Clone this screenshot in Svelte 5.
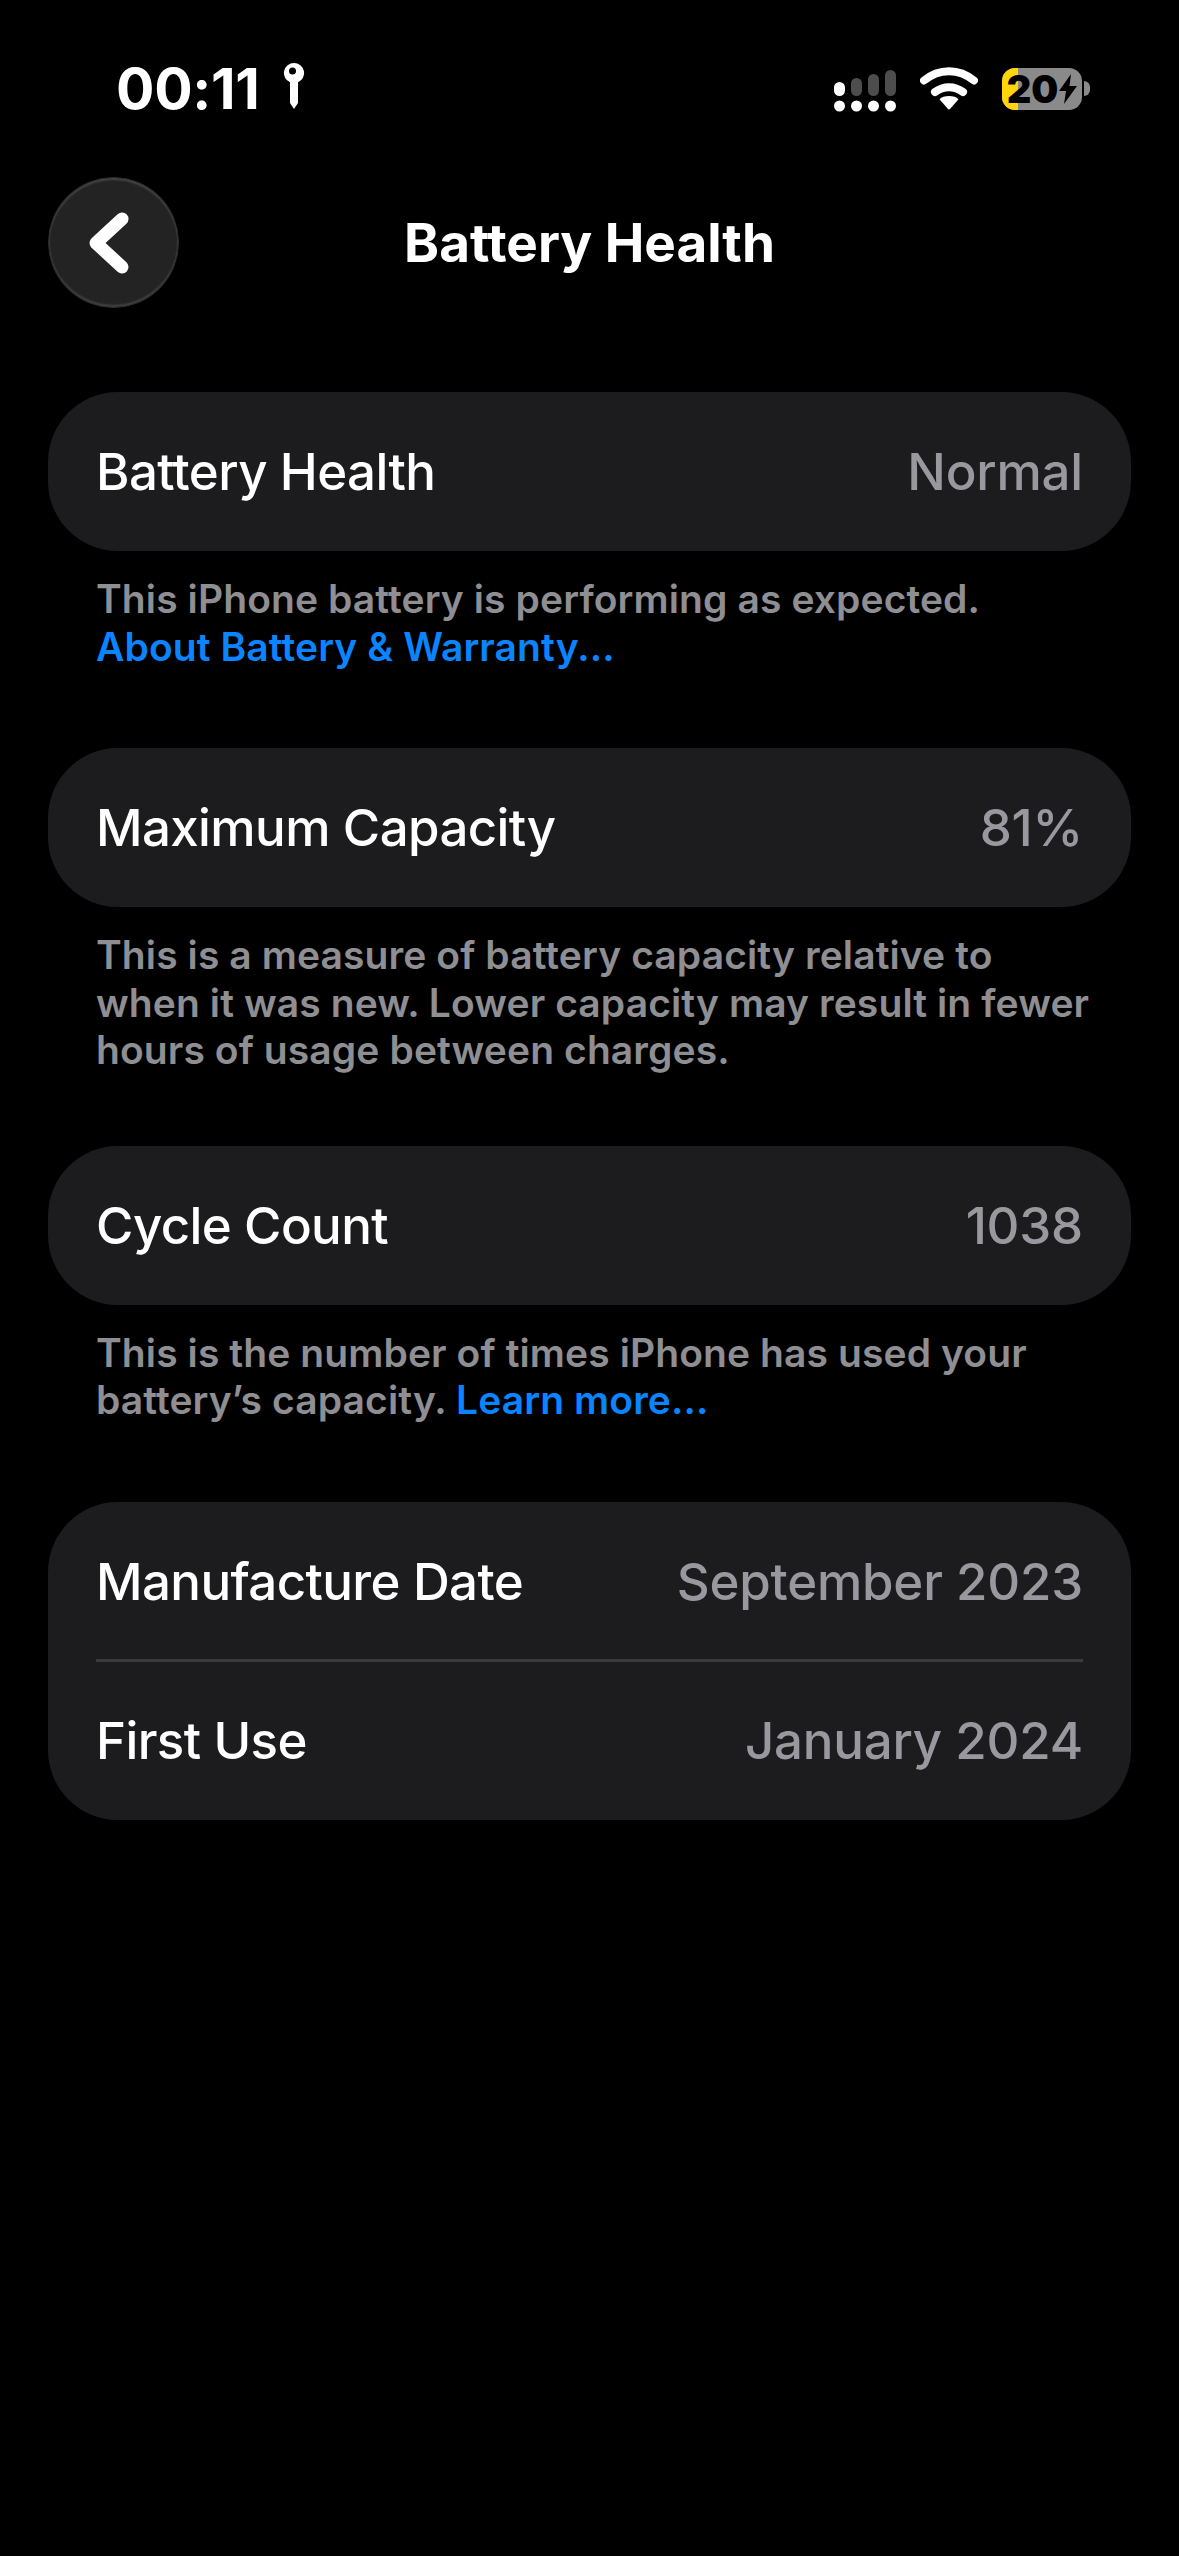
<script>
  const sections = [
    { rows: [{ label: "Battery Health", value: "Normal" }], note: "This iPhone battery is performing as expected.", link: "About Battery & Warranty...", block: true },
    { rows: [{ label: "Maximum Capacity", value: "81%" }], note: "This is a measure of battery capacity relative to when it was new. Lower capacity may result in fewer hours of usage between charges.", tight: true },
    { rows: [{ label: "Cycle Count", value: "1038" }], note: "This is the number of times iPhone has used your battery’s capacity.", link: "Learn more..." },
    { rows: [{ label: "Manufacture Date", value: "September 2023" }, { label: "First Use", value: "January 2024" }] }
  ];
</script>

<div class="page">
  <div class="status">
    <div class="time-wrap">
      <span class="time">00:11</span>
      <svg class="key" width="22" height="48" viewBox="0 0 22 48">
        <path fill="#fff" fill-rule="evenodd" d="M11 1a10 10 0 0 1 4 19.200V41l-4 6-4-6V20.200A10 10 0 0 1 11 1zm-1.500 4.500a3.500 3.500 0 1 0 0 7 3.500 3.500 0 0 0 0-7z" />
      </svg>
    </div>
    <div class="status-right">
      <svg class="signal" width="62" height="42" viewBox="0 0 62 42">
        <rect x="0" y="12" width="11" height="14" rx="5.500" fill="#fff" />
        <rect x="17" y="8" width="11" height="18" rx="5.500" fill="#4d4d4d" />
        <rect x="34" y="4" width="11" height="22" rx="5.500" fill="#4d4d4d" />
        <rect x="51" y="0" width="11" height="26" rx="5.500" fill="#4d4d4d" />
        <circle cx="5.500" cy="36" r="5.500" fill="#fff" />
        <circle cx="22.500" cy="36" r="5.500" fill="#fff" />
        <circle cx="39.500" cy="36" r="5.500" fill="#fff" />
        <circle cx="56.500" cy="36" r="5.500" fill="#fff" />
      </svg>
      <svg class="wifi" width="58" height="43" viewBox="0 0 58 43">
        <path fill="none" stroke="#fff" stroke-width="8" stroke-linecap="round" d="M4 13.500C19 1 39 1 54 13.500" />
        <path fill="none" stroke="#fff" stroke-width="8" stroke-linecap="round" d="M15 25c8.500-6.500 19.500-6.500 28 0" />
        <path fill="#fff" d="M29 29c4 0 7.500 1.200 9.500 3.200L30 42a1.500 1.500 0 0 1-2 0l-8.500-9.800C21.500 30.200 25 29 29 29z" />
      </svg>
      <div class="battery">
        <div class="cell">
          <div class="charge"></div>
          <span class="pct">20</span>
          <svg class="bolt" width="18" height="30" viewBox="0 0 18 30"><path d="M12 0 0 17h7l-2 13L18 12h-7.500z" fill="#000" /></svg>
        </div>
        <div class="nub"></div>
      </div>
    </div>
  </div>

  <div class="nav">
    <button class="back" aria-label="Back">
      <svg width="44" height="62" viewBox="0 0 44 62">
        <path d="M35 7 9 31l26 24" fill="none" stroke="#fff" stroke-width="13" stroke-linecap="round" stroke-linejoin="round" />
      </svg>
    </button>
    <h1>Battery Health</h1>
  </div>

  {#each sections as s}
    <section class:tight={s.tight}>
      <div class="card">
        {#each s.rows as r, i}
          {#if i > 0}<div class="divider"></div>{/if}
          <div class="row">
            <span class="label">{r.label}</span>
            <span class="value">{r.value}</span>
          </div>
        {/each}
      </div>
      {#if s.note}
        <p class="note">{s.note}{#if s.link}{#if s.block}<br />{:else}{" "}{/if}<span class="link">{s.link}</span>{/if}</p>
      {/if}
    </section>
  {/each}
</div>

<style>
  :global(body) {
    margin: 0;
    background: #000;
  }

  .page {
    width: 1179px;
    height: 2556px;
    background: #000;
    color: #fff;
    font-family: Inter, "Liberation Sans", sans-serif;
    overflow: hidden;
    box-sizing: border-box;
  }

  .status {
    display: flex;
    justify-content: space-between;
    align-items: center;
    height: 87px;
    padding: 6px 89px 0 116px;
    margin-top: 42px;
    margin-bottom: 48px;
    box-sizing: border-box;
  }

  .time-wrap {
    display: flex;
    align-items: center;
    gap: 23px;
  }

  .time {
    font-size: 57px;
    font-weight: 700;
    letter-spacing: -0.3px;
  }

  .key {
    margin-top: -6px;
  }

  .status-right {
    display: flex;
    align-items: center;
    gap: 24px;
  }

  .signal {
    margin-top: 5px;
  }

  .battery {
    display: flex;
    align-items: center;
    gap: 2px;
  }

  .cell {
    position: relative;
    display: flex;
    align-items: center;
    justify-content: center;
    width: 80px;
    height: 42px;
    border-radius: 13px;
    background: #8a8a8a;
  }

  .charge {
    position: absolute;
    left: 0;
    top: 0;
    bottom: 0;
    width: 16px;
    border-radius: 13px 0 0 13px;
    background: #ffd60a;
  }

  .pct {
    position: relative;
    font-size: 38px;
    line-height: 1;
    font-weight: 900;
    color: #000;
  }

  .bolt {
    position: relative;
    margin-left: 1px;
  }

  .nub {
    width: 6px;
    height: 15px;
    background: #8a8a8a;
    border-radius: 0 8px 8px 0;
  }

  .nav {
    position: relative;
    display: flex;
    align-items: center;
    justify-content: center;
    height: 131px;
    margin-bottom: 84px;
  }

  .back {
    position: absolute;
    left: 48px;
    top: 0;
    display: flex;
    align-items: center;
    justify-content: center;
    width: 131px;
    height: 131px;
    padding: 0 10px 0 0;
    border-radius: 50%;
    border: 1px solid #2e2e2e;
    background: #232323;
    box-shadow: inset 0 2px 2px rgba(255, 255, 255, 0.16), inset 0 -2px 2px rgba(255, 255, 255, 0.14);
    box-sizing: border-box;
  }

  h1 {
    margin: 0;
    font-size: 53px;
    font-weight: 700;
    letter-spacing: 0;
  }

  section {
    padding: 0 48px;
    margin-bottom: 78px;
  }

  section.tight {
    margin-bottom: 72px;
  }

  .card {
    background: #1c1c1e;
    border-radius: 70px;
  }

  .row {
    display: flex;
    justify-content: space-between;
    align-items: center;
    height: 159px;
    padding: 0 48px;
    font-size: 51px;
    font-weight: 500;
    letter-spacing: -0.6px;
  }

  .value {
    color: #98989e;
    letter-spacing: -0.2px;
  }

  .divider {
    height: 3px;
    margin: -2px 48px -1px;
    background: #3a3a3c;
    position: relative;
  }

  .note {
    margin: 24px 0 0;
    padding: 0 30px 0 48px;
    font-size: 39px;
    line-height: 47.5px;
    font-weight: 600;
    letter-spacing: 0.1px;
    color: #8e8e93;
  }

  .link {
    color: #0a84ff;
  }
</style>
